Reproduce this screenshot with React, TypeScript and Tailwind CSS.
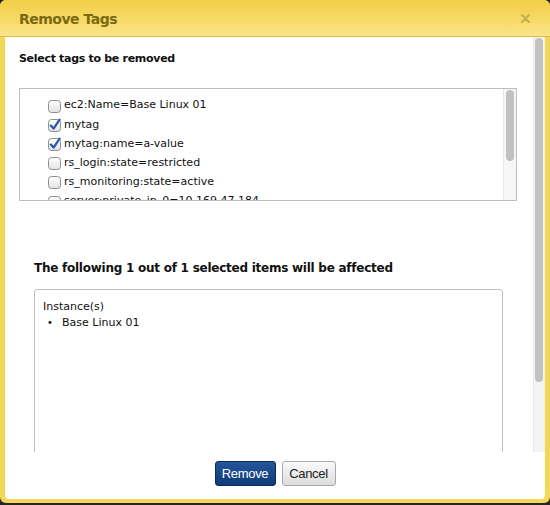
import React from 'react';

const tags = [
  { label: 'ec2:Name=Base Linux 01', checked: false },
  { label: 'mytag', checked: true },
  { label: 'mytag:name=a-value', checked: true },
  { label: 'rs_login:state=restricted', checked: false },
  { label: 'rs_monitoring:state=active', checked: false },
  { label: 'server:private_ip_0=10.169.47.184', checked: false },
];

const Checkbox: React.FC<{ checked: boolean }> = ({ checked }) => (
  <svg width="14" height="14" viewBox="0 0 14 14" className="shrink-0 overflow-visible">
    <defs>
      <linearGradient id="cbfill" x1="0" y1="0" x2="0" y2="1">
        <stop offset="0" stopColor="#ffffff" />
        <stop offset="1" stopColor="#e2e2e2" />
      </linearGradient>
    </defs>
    <rect x="0.5" y="1.5" width="12" height="12" rx="3" fill="url(#cbfill)" stroke="#8e8e8e" />
    {checked && (
      <path
        d="M2.8 7.6 L5.6 10.6 L11.6 1.6"
        fill="none"
        stroke="#2457b0"
        strokeWidth="2.2"
        strokeLinecap="round"
        strokeLinejoin="round"
      />
    )}
  </svg>
);

const App: React.FC = () => {
  return (
    <div className="w-[550px] h-[505px] bg-[#262626] font-['DejaVu_Sans',sans-serif] text-[#111]">
      <div className="w-[550px] h-[503px] rounded-[6px] bg-[#f5d758] flex flex-col overflow-hidden">
        {/* title bar */}
        <div className="h-[37px] shrink-0 flex items-center justify-between pl-[19px] pr-[19px] bg-[linear-gradient(to_bottom,#f3cf47,#f6da66_55%,#f9e48c)] border-b border-[#dfb83c]">
          <span className="text-[14px] font-bold tracking-[-0.5px] text-[#7a6912] mt-[2px]">Remove Tags</span>
          <svg width="9" height="9" viewBox="0 0 9 9" className="mt-[1px] mr-[1px]">
            <path d="M1 1 L8 8 M8 1 L1 8" stroke="#c7b14f" strokeWidth="2.2" strokeLinecap="round" />
          </svg>
        </div>

        {/* body */}
        <div className="mx-[5px] mb-[4px] flex-1 bg-white rounded-b-[4px] flex flex-col overflow-hidden">
          <div className="h-[415px] flex">
            <div className="flex-1 overflow-hidden pl-[14px] pt-[15px]">
              <div className="text-[11px] leading-[14px] font-bold tracking-[-0.3px]">Select tags to be removed</div>

              <div className="mt-[22px] w-[498px] h-[113px] border border-[#bdbdbd] flex overflow-hidden">
                <div className="flex-1 pl-[28px] pt-[7px] overflow-hidden">
                  {tags.map((t) => (
                    <div key={t.label} className="h-[19.2px] flex items-center gap-[2px] text-[11px] whitespace-nowrap">
                      <Checkbox checked={t.checked} />
                      <span>{t.label}</span>
                    </div>
                  ))}
                </div>
                <div className="w-[13px] h-full bg-[#f6f6f6] border-l border-[#e6e6e6] pt-[1px] pl-[2px]">
                  <div className="w-[8px] h-[71px] rounded-full bg-[#c1c1c1]" />
                </div>
              </div>

              <div className="ml-[15px] mt-[60px] text-[12px] leading-[15px] font-bold tracking-[-0.25px]">
                The following 1 out of 1 selected items will be affected
              </div>

              <div className="ml-[15px] mt-[13px] w-[469px] h-[220px] border border-[#bfbfbf] rounded-[3px] pl-[8px] pt-[9px] text-[11px] leading-[16px]">
                <div>Instance(s)</div>
                <div className="flex items-center">
                  <span className="w-[19px] pl-[4px] text-[10px]">•</span>
                  <span>Base Linux 01</span>
                </div>
              </div>
            </div>

            {/* main scrollbar */}
            <div className="w-[12px] h-full bg-[#f4f4f4] border-l border-[#e8e8e8] pt-[1px] pl-[1px]">
              <div className="w-[8px] h-[344px] rounded-full bg-[#c1c1c1]" />
            </div>
          </div>

          {/* footer */}
          <div className="flex-1 flex justify-center items-start pt-[9px] gap-[6px] font-['Liberation_Sans',Arial,sans-serif] text-[13px]">
            <button className="w-[61px] h-[25px] rounded-[3px] border border-[#0a2a57] bg-[linear-gradient(to_bottom,#24569a,#0f3b78)] text-white tracking-[-0.3px]">
              Remove
            </button>
            <button className="w-[54px] h-[25px] rounded-[3px] border border-[#a9a9a9] bg-[linear-gradient(to_bottom,#fbfbfb,#dcdcdc)] text-[#222] tracking-[-0.3px]">
              Cancel
            </button>
          </div>
        </div>
      </div>
    </div>
  );
};

export default App;
